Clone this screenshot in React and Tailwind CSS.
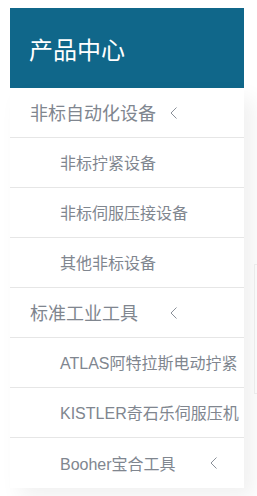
import React from 'react';

const items = [
  { label: '非标自动化设备', level: 1, arrow: true },
  { label: '非标拧紧设备', level: 2 },
  { label: '非标伺服压接设备', level: 2 },
  { label: '其他非标设备', level: 2 },
  { label: '标准工业工具', level: 1, arrow: true },
  { label: 'ATLAS阿特拉斯电动拧紧', level: 2 },
  { label: 'KISTLER奇石乐伺服压机', level: 2 },
  { label: 'Booher宝合工具', level: 2, arrow: true },
];

function Chevron() {
  return (
    <svg width="8" height="12" viewBox="0 0 8 12" className="shrink-0">
      <path d="M6.5 0.5 L1 6 L6.5 11.5" fill="none" stroke="#8a9099" strokeWidth="1" />
    </svg>
  );
}

export default function App() {
  return (
    <div
      className="flex items-start w-[257px] h-[496px] overflow-hidden bg-white pt-[8px] pl-[10px]"
      style={{ fontFamily: '"Liberation Sans", "Noto Sans CJK SC", sans-serif' }}
    >
      <div className="w-[234px] shrink-0 flex flex-col">
        {/* Header */}
        <div className="h-[80px] bg-[#10678a] flex items-center pl-[19px] pt-[5px]">
          <span className="text-[24px] text-white leading-none">产品中心</span>
        </div>

        {/* Menu list */}
        <ul className="bg-white shadow-[10px_10px_20px_rgba(0,0,0,0.06)]">
          {items.map((it, i) => (
            <li
              key={i}
              className={`h-[50px] flex items-center text-[#80868f] ${
                i < items.length - 1 ? 'border-b border-[#e6e6e6]' : 'h-[49px]'
              } ${it.level === 1 ? 'pl-[20px] text-[18px]' : 'pl-[50px] text-[16px]'}`}
            >
              <span
                className={`pt-[3px] leading-none whitespace-nowrap ${
                  it.arrow ? (it.level === 1 ? 'w-[140px]' : 'w-[150px]') : ''
                }`}
              >
                {it.label}
              </span>
              {it.arrow && <Chevron />}
            </li>
          ))}
        </ul>
      </div>

      {/* Box peeking in from the right */}
      <div className="ml-[10px] mt-[256px] w-[100px] h-[130px] shrink-0 border border-[#ebebeb]" />
    </div>
  );
}
